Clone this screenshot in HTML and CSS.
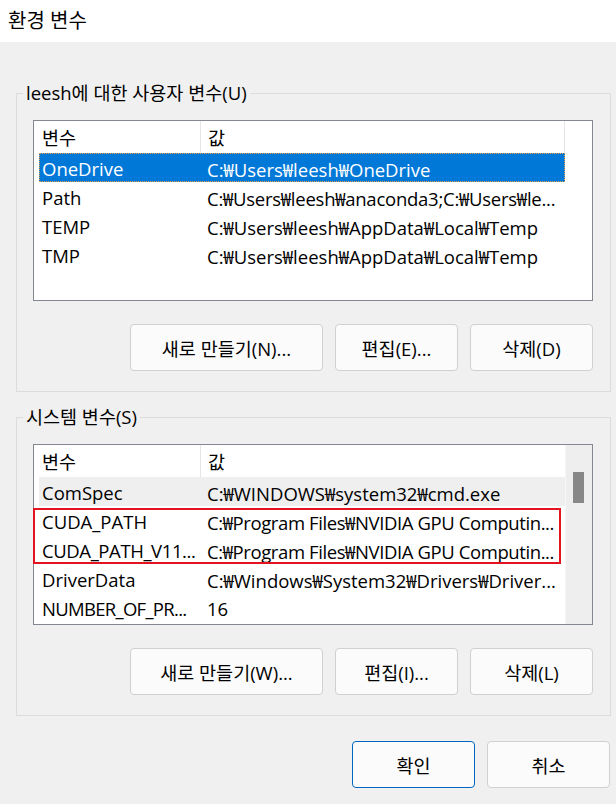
FILE: index.html
```html
<!DOCTYPE html>
<html lang="ko">
<head>
<meta charset="utf-8">
<title>환경 변수</title>
<link rel="stylesheet" href="styles.css">
</head>
<body>
<div class="titlebar"><span class="title">환경 변수</span></div>
<div class="dialog">
  <fieldset class="group group-user">
    <legend>leesh에 대한 사용자 변수(U)</legend>
    <div class="listbox">
      <div class="lv-main">
        <div class="lv-header">
          <div class="hc hc1">변수</div>
          <div class="hc hc2">값</div>
          <div class="hc hc3"></div>
        </div>
        <div class="row selected"><span class="c1">OneDrive</span><span class="c2">C:₩Users₩leesh₩OneDrive</span></div>
        <div class="row"><span class="c1">Path</span><span class="c2 tight-s">C:₩Users₩leesh₩anaconda3;C:₩Users₩le...</span></div>
        <div class="row"><span class="c1">TEMP</span><span class="c2">C:₩Users₩leesh₩AppData₩Local₩Temp</span></div>
        <div class="row"><span class="c1">TMP</span><span class="c2">C:₩Users₩leesh₩AppData₩Local₩Temp</span></div>
      </div>
    </div>
    <div class="btnrow">
      <button class="btn btn-wide">새로 만들기(N)...</button>
      <button class="btn">편집(E)...</button>
      <button class="btn">삭제(D)</button>
    </div>
  </fieldset>

  <fieldset class="group group-system">
    <legend>시스템 변수(S)</legend>
    <div class="listbox has-scroll">
      <div class="lv-main">
        <div class="lv-header">
          <div class="hc hc1">변수</div>
          <div class="hc hc2 last">값</div>
        </div>
        <div class="row hover"><span class="c1">ComSpec</span><span class="c2">C:₩WINDOWS₩system32₩cmd.exe</span></div>
        <div class="row"><span class="c1">CUDA_PATH</span><span class="c2 tight">C:₩Program Files₩NVIDIA GPU Computin...</span></div>
        <div class="row"><span class="c1 tight">CUDA_PATH_V11...</span><span class="c2 tight">C:₩Program Files₩NVIDIA GPU Computin...</span></div>
        <div class="row"><span class="c1">DriverData</span><span class="c2">C:₩Windows₩System32₩Drivers₩Driver...</span></div>
        <div class="row"><span class="c1 tighter">NUMBER_OF_PR...</span><span class="c2">16</span></div>
      </div>
      <div class="scrollbar"><div class="thumb"></div></div>
      <div class="highlight-box"></div>
    </div>
    <div class="btnrow">
      <button class="btn btn-wide">새로 만들기(W)...</button>
      <button class="btn">편집(I)...</button>
      <button class="btn">삭제(L)</button>
    </div>
  </fieldset>

  <div class="footer">
    <button class="btn btn-default">확인</button>
    <button class="btn">취소</button>
  </div>
</div>
</body>
</html>
```

FILE: styles.css
```css
* { box-sizing: border-box; }

html, body {
  margin: 0;
  padding: 0;
}

body {
  width: 616px;
  height: 804px;
  overflow: hidden;
  background: #f0f0f0;
  font-family: "Open Sans", "Noto Sans CJK KR", sans-serif;
  font-size: 18.5px;
  color: #000;
}

.titlebar {
  height: 42px;
  background: #ffffff;
  display: flex;
  align-items: center;
  padding-left: 8px;
}

.title {
  font-size: 20px;
  line-height: 24px;
}

.dialog {
  display: flex;
  flex-direction: column;
  padding-top: 40px;
}

.group {
  margin: 0 5px 0 16px;
  padding: 16px 17px 20px 16px;
  border: 1px solid #dcdcdc;
  min-width: 0;
}

.group-system {
  margin-top: 14px;
}

.group legend {
  font-size: 18.5px;
  line-height: 22px;
  padding: 0 3px;
  margin-left: -10px;
}

.listbox {
  position: relative;
  width: 560px;
  height: 181px;
  border: 1px solid #828790;
  background: #ffffff;
  display: flex;
}

.lv-main {
  flex: 1;
  min-width: 0;
}

.lv-header {
  display: flex;
  height: 32px;
}

.hc {
  height: 32px;
  display: flex;
  align-items: center;
  border-right: 1px solid #e5e5e5;
  white-space: nowrap;
}

.hc1 {
  width: 167px;
  padding-left: 8px;
}

.hc2 {
  width: 364px;
  padding-left: 7px;
}

.hc2.last {
  border-right: none;
}

.hc3 {
  flex: 1;
  border-right: none;
}

.row {
  display: flex;
  align-items: center;
  height: 29px;
  width: 526px;
  margin-left: 5px;
  white-space: nowrap;
  border: 1px solid transparent;
  padding-top: 2px;
}

.row .c1 {
  width: 167px;
  padding-left: 2px;
  overflow: hidden;
}

.row .c2 {
  flex: 1;
  overflow: hidden;
}

.row .tight {
  letter-spacing: -0.4px;
}

.row .tight-s {
  letter-spacing: -0.25px;
}

.row .tighter {
  letter-spacing: -0.7px;
}

.row.selected {
  background: #0078d7;
  color: #ffffff;
  border: 1px dotted #e9a14c;
}

.row.hover {
  background: #efefef;
}

.scrollbar {
  width: 27px;
  background: #eeeeee;
  border-left: 1px solid #f6f6f6;
  padding-top: 27px;
  padding-left: 7px;
}

.thumb {
  width: 11px;
  height: 31px;
  background: #878787;
}

.highlight-box {
  position: absolute;
  left: -1px;
  top: 63px;
  width: 528px;
  height: 56px;
  border: 2px solid #e3141f;
  pointer-events: none;
}

.btnrow {
  display: flex;
  justify-content: flex-end;
  gap: 12px;
  margin-top: 23px;
}

.btn {
  font-family: inherit;
  font-size: 18.5px;
  color: #000;
  width: 123px;
  height: 47px;
  border: 1px solid #d0d0d0;
  border-radius: 4px;
  background: #fbfbfb;
  padding: 0;
}

.btn-wide {
  width: 193px;
}

.btn-default {
  border-color: #0067c0;
}

.footer {
  display: flex;
  justify-content: flex-end;
  gap: 12px;
  margin-top: 25px;
  padding-right: 6px;
}
```
